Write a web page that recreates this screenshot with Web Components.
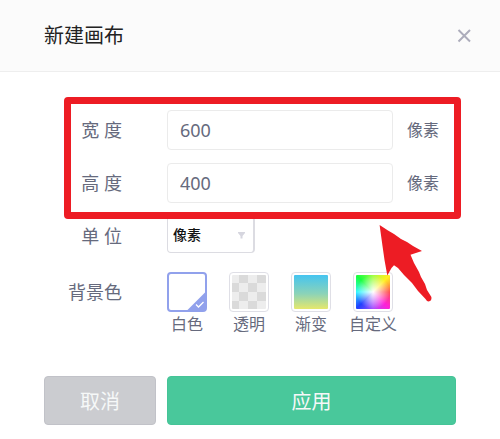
<!DOCTYPE html>
<html lang="zh-CN">
<head>
<meta charset="utf-8">
<meta name="viewport" content="width=device-width, initial-scale=1">
<title>新建画布</title>
<style>
  body {
    margin: 0;
    background: #fff;
    color: #666a7d;
    font-family: "Noto Sans", "Noto Sans CJK SC", sans-serif;
    font-size: 18px;
  }
</style>
</head>
<body>

<canvas-dialog heading="新建画布">
  <callout-frame>
    <dimension-field label="宽 度" value="600" unit="像素"></dimension-field>
    <dimension-field label="高 度" value="400" unit="像素"></dimension-field>
  </callout-frame>
  <unit-select></unit-select>
  <background-picker></background-picker>
  <action-button slot="actions">取消</action-button>
  <action-button slot="actions" primary>应用</action-button>
</canvas-dialog>

<script>
// shared by every labelled row of the form
const rowStyles = `
  :host {
    display: block;
  }
  .row {
    display: grid;
    grid-template-columns: 78px minmax(0, 1fr);
    column-gap: 45px;
    min-height: 40px;
    align-items: center;
  }
  .label {
    text-align: right;
    line-height: 24px;
    white-space: nowrap;
  }
`;

class CanvasDialog extends HTMLElement {
  constructor() {
    super();
    const shadow = this.attachShadow({ mode: 'open' });
    shadow.innerHTML = `
      <style>
        :host {
          display: block;
        }
        header {
          display: flex;
          align-items: center;
          justify-content: space-between;
          height: 71px;
          padding: 0 28px 0 44px;
          background: #fbfbfb;
          border-bottom: 1px solid #eee;
        }
        h1 {
          margin: 0;
          font-size: 20px;
          font-weight: 400;
          line-height: 28px;
          color: #222;
        }
        .close {
          display: flex;
          padding: 0;
          border: none;
          background: transparent;
          cursor: pointer;
        }
        .body {
          display: flex;
          flex-direction: column;
          gap: 13px;
          padding: 38px 44px 0;
        }
        footer {
          display: grid;
          grid-template-columns: 112px minmax(0, 1fr);
          gap: 11px;
          padding: 40px 44px 14px;
        }
      </style>
      <header>
        <h1></h1>
        <button class="close" type="button" aria-label="关闭">
          <svg width="16" height="16" viewBox="0 0 16 16" fill="none" stroke="#acacbb" stroke-width="2">
            <path d="M2.5 2 14 13.500M14 2 2.500 13.500"/>
          </svg>
        </button>
      </header>
      <div class="body"><slot></slot></div>
      <footer><slot name="actions"></slot></footer>
    `;
    shadow.querySelector('h1').textContent = this.getAttribute('heading');
  }
}

// Red frame and arrow drawn over the fields it wraps
class CalloutFrame extends HTMLElement {
  constructor() {
    super();
    const shadow = this.attachShadow({ mode: 'open' });
    shadow.innerHTML = `
      <style>
        :host {
          display: flex;
          flex-direction: column;
          gap: 13px;
          position: relative;
          z-index: 1;
        }
        .frame {
          position: absolute;
          inset: -13px -5px -16px 20px;
          border: 7px solid #ed1c24;
          border-radius: 4px;
          pointer-events: none;
        }
        .arrow {
          position: absolute;
          top: 115px;
          right: 23px;
          pointer-events: none;
        }
      </style>
      <slot></slot>
      <div class="frame"></div>
      <svg class="arrow" width="54" height="78" viewBox="0 0 54 78" fill="#ed1c24" aria-hidden="true">
        <path d="M.6 0 9 5.500 15 9 22 14 28 17 34 21 43 26 31.500 29.700 35 38 40 47 42 52 46 59 48 65 52.400 72Q53 76 49.500 76.500 48 76.500 46.500 74L39 66 33 58 25 50 19 43 15 40.300 12.500 43 8.300 50.500 5.500 35 3.500 21Z"/>
      </svg>
    `;
  }
}

class DimensionField extends HTMLElement {
  constructor() {
    super();
    const shadow = this.attachShadow({ mode: 'open' });
    shadow.innerHTML = `
      <style>
        ${rowStyles}
        .field {
          display: grid;
          grid-template-columns: minmax(0, 1fr) 49px;
          column-gap: 14px;
          align-items: center;
        }
        input {
          box-sizing: border-box;
          width: 100%;
          height: 40px;
          padding: 0 12px;
          border: 1px solid #ebebeb;
          border-radius: 4px;
          background: #fff;
          color: #666a7d;
          font: inherit;
        }
        .unit {
          font-size: 16px;
          line-height: 24px;
        }
      </style>
      <div class="row">
        <label class="label" for="size"></label>
        <div class="field">
          <input id="size" type="text" inputmode="numeric">
          <span class="unit"></span>
        </div>
      </div>
    `;
    shadow.querySelector('label').textContent = this.getAttribute('label');
    shadow.querySelector('input').value = this.getAttribute('value');
    shadow.querySelector('.unit').textContent = this.getAttribute('unit');
  }
}

class UnitSelect extends HTMLElement {
  constructor() {
    super();
    const shadow = this.attachShadow({ mode: 'open' });
    shadow.innerHTML = `
      <style>
        ${rowStyles}
        .wrap {
          display: grid;
          width: 88px;
          align-self: start;
          align-items: center;
        }
        select, svg {
          grid-area: 1 / 1;
        }
        select {
          appearance: none;
          box-sizing: border-box;
          height: 37px;
          padding: 0 24px 0 5px;
          border: 1px solid #dcdce2;
          border-right-width: 2px;
          border-radius: 4px;
          background: #fff;
          color: #111;
          font-family: inherit;
          font-size: 14px;
          font-weight: 500;
        }
        svg {
          justify-self: end;
          margin-right: 9px;
          pointer-events: none;
        }
      </style>
      <div class="row">
        <label class="label" for="unit">单 位</label>
        <div class="wrap">
          <select id="unit"><option>像素</option></select>
          <svg width="9" height="8" viewBox="0 0 9 8" fill="#d6d6df"><path d="M1 1h7v1L5.500 5v2.500h-2V5L1 2z"/></svg>
        </div>
      </div>
    `;
  }
}

class BackgroundPicker extends HTMLElement {
  constructor() {
    super();
    const shadow = this.attachShadow({ mode: 'open' });
    shadow.innerHTML = `
      <style>
        ${rowStyles}
        :host {
          margin-top: 3px;
        }
        .row {
          align-items: start;
        }
        .label {
          line-height: 40px;
        }
        .options {
          display: flex;
          gap: 22px;
        }
        .option {
          display: flex;
          flex-direction: column;
          align-items: center;
          position: relative;
          width: 40px;
          font-size: 16px;
          line-height: 24px;
          white-space: nowrap;
        }
        input {
          appearance: none;
          box-sizing: border-box;
          width: 40px;
          height: 40px;
          margin: 0;
          padding: 2px;
          border: 1px solid #dfdfe6;
          border-radius: 4px;
          background-clip: content-box;
          background-origin: content-box;
          cursor: pointer;
        }
        input:checked {
          padding: 0;
          border: 2px solid #91a1ec;
        }
        .check {
          display: none;
          position: absolute;
          top: 20px;
          left: 20px;
          pointer-events: none;
        }
        input:checked + .check {
          display: block;
        }
        .clear {
          background-image: conic-gradient(#dadada 25%, #ededed 0 50%, #dadada 0 75%, #ededed 0);
          background-size: 18px 18px;
          background-position: -2px -1px;
        }
        .gradient {
          background-image: linear-gradient(#45c4f0, #8bd3b8 55%, #e6e86c);
        }
        .custom {
          background-image:
            radial-gradient(circle, #fff, #fff0 70%),
            conic-gradient(#a0ff40, #fff020 45deg, #ff5050 90deg, #ff20d8 135deg, #a850ff 180deg, #2040ff 225deg, #30f8ff 270deg, #18ff40 315deg, #a0ff40);
        }
      </style>
      <div class="row" role="radiogroup" aria-labelledby="title">
        <span class="label" id="title">背景色</span>
        <div class="options"></div>
      </div>
    `;

    const options = [
      ['white', '白色'],
      ['clear', '透明'],
      ['gradient', '渐变'],
      ['custom', '自定义'],
    ];
    shadow.querySelector('.options').innerHTML = options.map(([name, text], i) => `
      <label class="option">
        <input class="${name}" type="radio" name="background" value="${name}" ${i === 0 ? 'checked' : ''}>
        <svg class="check" width="20" height="20" viewBox="0 0 20 20">
          <path d="M0 18.500 18.500 0V18.500Z" fill="#91a1ec"/>
          <path d="m9 12.500 2.500 2.500 5-5" fill="none" stroke="#fff" stroke-width="1.300"/>
        </svg>
        <span>${text}</span>
      </label>
    `).join('');
  }
}

class ActionButton extends HTMLElement {
  constructor() {
    super();
    const shadow = this.attachShadow({ mode: 'open' });
    shadow.innerHTML = `
      <style>
        :host {
          display: block;
          --fill: #cbccd0;
          --edge: #c1c2c8;
        }
        :host([primary]) {
          --fill: #49c89b;
          --edge: #45c497;
        }
        button {
          display: block;
          width: 100%;
          height: 49px;
          padding: 0;
          border: 1px solid var(--edge);
          border-radius: 4px;
          background: var(--fill);
          color: #f6f8f8;
          font-family: inherit;
          font-size: 20px;
          cursor: pointer;
        }
      </style>
      <button type="button"><slot></slot></button>
    `;
  }
}

customElements.define('canvas-dialog', CanvasDialog);
customElements.define('callout-frame', CalloutFrame);
customElements.define('dimension-field', DimensionField);
customElements.define('unit-select', UnitSelect);
customElements.define('background-picker', BackgroundPicker);
customElements.define('action-button', ActionButton);
</script>
</body>
</html>
